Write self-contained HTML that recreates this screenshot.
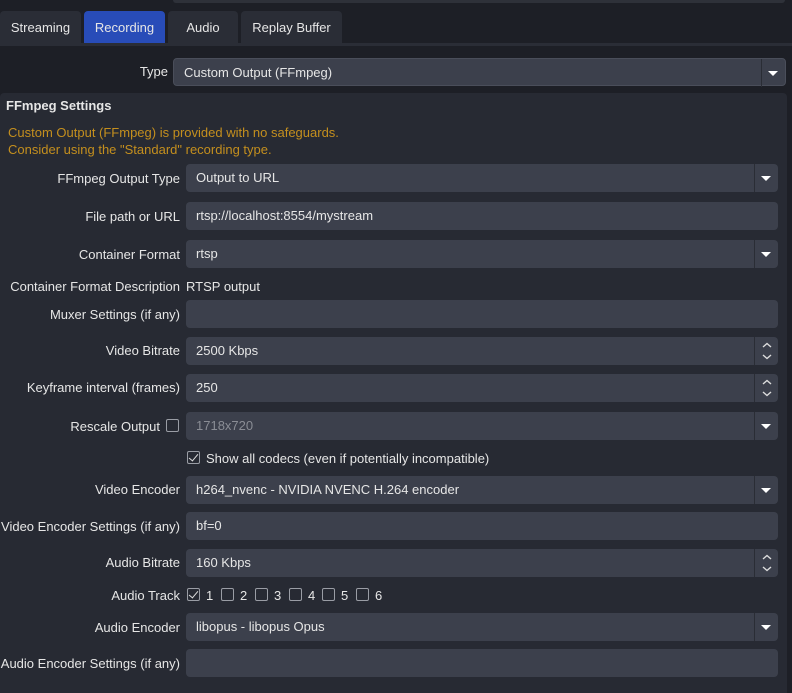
<!DOCTYPE html>
<html><head><style>
*{margin:0;padding:0;box-sizing:border-box}
body{width:792px;height:691px;background:#1d1f26;font-family:"Liberation Sans",sans-serif;font-size:13px;color:#e6e6e6;position:relative;overflow:hidden}
.a{position:absolute}
.tab{position:absolute;top:11px;height:33px;background:#2a2d36;border-radius:4px 4px 0 0;text-align:center;line-height:33px;font-size:13px}
.lbl{position:absolute;right:612px;white-space:nowrap;text-align:right}
.in{position:absolute;left:186px;width:592px;height:28px;background:#3c404c;border-radius:4px;padding-left:10px;line-height:28px}
.dd::after{content:"";position:absolute;right:0;top:0;width:23px;height:28px;border-left:1px solid #2a2d35}
.dd::before{content:"";position:absolute;right:7px;top:12px;border-left:5px solid transparent;border-right:5px solid transparent;border-top:5px solid #fff}
.sp::after{content:"";position:absolute;right:0;top:0;width:23px;height:28px;border-left:1px solid #2a2d35}
.sp svg{position:absolute;right:5px;top:4px}
.cb{position:absolute;width:13px;height:13px;border:1px solid #9a9da5;border-radius:2px}
.cb.c::after{content:"";position:absolute;left:3px;top:0px;width:4px;height:8px;border-right:1.5px solid #ddd;border-bottom:1.5px solid #ddd;transform:rotate(40deg)}
</style></head><body>
<div class="a" style="left:173px;top:0;width:612px;height:3px;background:#2e3139;border-radius:0 0 3px 3px"></div>
<div class="tab" style="left:0;width:81px">Streaming</div>
<div class="tab" style="left:84px;width:81px;background:#284cb8">Recording</div>
<div class="tab" style="left:168px;width:70px">Audio</div>
<div class="tab" style="left:241px;width:101px">Replay Buffer</div>
<div class="a" style="left:0;top:43px;width:792px;height:3px;background:#2a2d36"></div>
<div class="lbl" style="right:624px;top:64px;font-size:13px">Type</div>
<div class="in dd" style="left:173px;top:58px;width:613px;height:28px;border:1px solid #4a4e5a">Custom Output (FFmpeg)</div>
<div class="a" style="left:0;top:93px;width:787px;height:600px;background:#272a33;border-radius:4px 4px 0 0"></div>
<div class="a" style="left:6px;top:98px;font-weight:bold;font-size:13px">FFmpeg Settings</div>
<div class="a" style="left:8px;top:124px;color:#c48f1e;line-height:17px">Custom Output (FFmpeg) is provided with no safeguards.<br>Consider using the "Standard" recording type.</div>

<div class="lbl" style="top:171px">FFmpeg Output Type</div><div class="in dd" style="top:164px">Output to URL</div>
<div class="lbl" style="top:209px">File path or URL</div><div class="in" style="top:202px">rtsp://localhost:8554/mystream</div>
<div class="lbl" style="top:247px">Container Format</div><div class="in dd" style="top:240px">rtsp</div>
<div class="lbl" style="top:279px">Container Format Description</div><div class="a" style="left:186px;top:279px">RTSP output</div>
<div class="lbl" style="top:307px">Muxer Settings (if any)</div><div class="in" style="top:300px"></div>
<div class="lbl" style="top:343px">Video Bitrate</div><div class="in sp" style="top:337px">2500 Kbps<svg width="12" height="20"><path d="M2 6L6 2.5L10 6M2 14L6 17.5L10 14" stroke="#ddd" stroke-width="1.4" fill="none"/></svg></div>
<div class="lbl" style="top:380px">Keyframe interval (frames)</div><div class="in sp" style="top:374px">250<svg width="12" height="20"><path d="M2 6L6 2.5L10 6M2 14L6 17.5L10 14" stroke="#ddd" stroke-width="1.4" fill="none"/></svg></div>
<div class="lbl" style="top:419px;right:632px">Rescale Output</div><div class="cb" style="left:166px;top:419px"></div>
<div class="in dd" style="top:412px;color:#8a8d95">1718x720</div>
<div class="cb c" style="left:187px;top:451px"></div><div class="a" style="left:206px;top:451px">Show all codecs (even if potentially incompatible)</div>
<div class="lbl" style="top:482px">Video Encoder</div><div class="in dd" style="top:476px">h264_nvenc - NVIDIA NVENC H.264 encoder</div>
<div class="lbl" style="top:519px">Video Encoder Settings (if any)</div><div class="in" style="top:512px">bf=0</div>
<div class="lbl" style="top:555px">Audio Bitrate</div><div class="in sp" style="top:549px">160 Kbps<svg width="12" height="20"><path d="M2 6L6 2.5L10 6M2 14L6 17.5L10 14" stroke="#ddd" stroke-width="1.4" fill="none"/></svg></div>
<div class="lbl" style="top:588px">Audio Track</div>
<div class="cb c" style="left:187px;top:588px"></div><div class="a" style="left:206px;top:588px">1</div>
<div class="cb" style="left:221px;top:588px"></div><div class="a" style="left:240px;top:588px">2</div>
<div class="cb" style="left:255px;top:588px"></div><div class="a" style="left:274px;top:588px">3</div>
<div class="cb" style="left:289px;top:588px"></div><div class="a" style="left:308px;top:588px">4</div>
<div class="cb" style="left:322px;top:588px"></div><div class="a" style="left:341px;top:588px">5</div>
<div class="cb" style="left:356px;top:588px"></div><div class="a" style="left:375px;top:588px">6</div>
<div class="lbl" style="top:620px">Audio Encoder</div><div class="in dd" style="top:613px">libopus - libopus Opus</div>
<div class="lbl" style="top:656px">Audio Encoder Settings (if any)</div><div class="in" style="top:649px"></div>
</body></html>
